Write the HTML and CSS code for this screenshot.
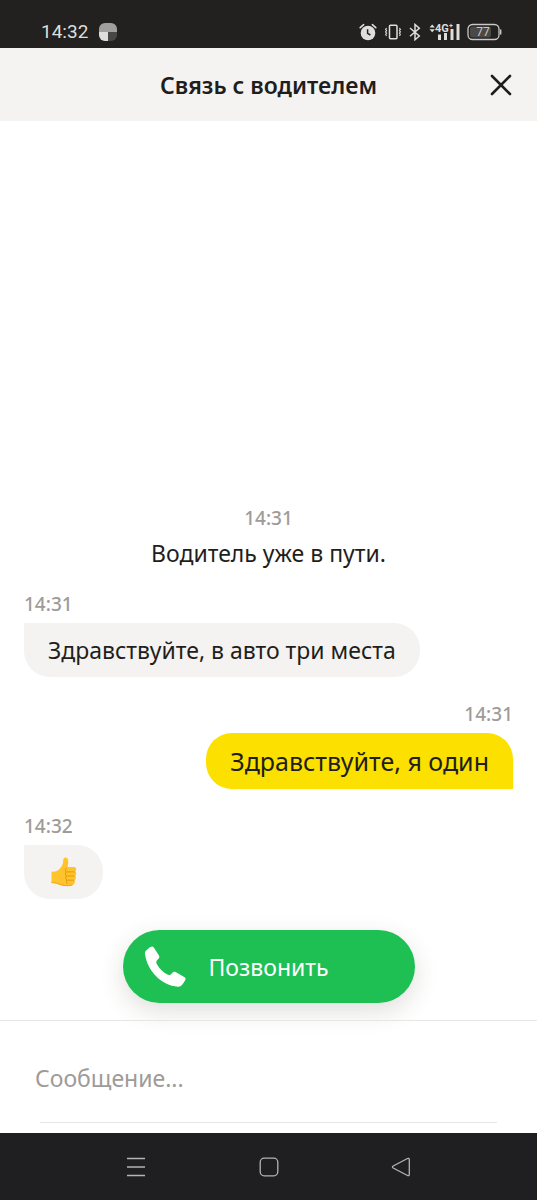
FILE: index.html
```html
<!DOCTYPE html>
<html lang="ru">
<head>
    <meta charset="UTF-8">
    <meta name="viewport" content="width=device-width, initial-scale=1.0">
    <title>Связь с водителем</title>
    <link rel="stylesheet" href="styles.css">
</head>
<body>
    <div class="status-bar">
        <span class="clock">14:32</span>
        <svg class="app-icon" width="18" height="18" viewBox="0 0 18 18">
            <path d="M0 9V6a6 6 0 0 1 6-6h6a6 6 0 0 1 6 6v3z" fill="#a09f9d"/>
            <path d="M0 9h9v9H6a6 6 0 0 1-6-6z" fill="#dededc"/>
            <path d="M9 9h9v3a6 6 0 0 1-6 6H9z" fill="#484745"/>
        </svg>
        <div class="status-icons">
            <svg width="18" height="18" viewBox="0 0 18 18">
                <circle cx="9" cy="10" r="7.3" fill="#dededc"/>
                <path d="M1.2 4.6 4.6 1.6M16.8 4.6l-3.4-3" stroke="#dededc" stroke-width="1.6" stroke-linecap="round"/>
                <path d="M8.6 6.3v4l2.8 1.7" fill="none" stroke="#22211f" stroke-width="1.5"/>
            </svg>
            <svg width="16" height="16" viewBox="0 0 16 16" fill="none" stroke="#dededc">
                <rect x="4.5" y="1.200" width="7.500" height="13.600" rx="1" stroke-width="1.5"/>
                <path d="M1.6 4 .6 5.3l1 1.3-1 1.3 1 1.3-1 1.3 1 1.3M14.4 4l1 1.3-1 1.3 1 1.3-1 1.3 1 1.3-1 1.3" stroke-width="1.1"/>
            </svg>
            <svg width="12" height="18" viewBox="0 0 12 18" fill="none" stroke="#dededc" stroke-width="1.5">
                <path d="m1 5 9.3 8L6 16.7V1.5l4.3 3.7L1 13.2"/>
            </svg>
            <svg width="32" height="18" viewBox="0 0 32 18" fill="#dededc">
                <path d="m.5 4.4 2.7-3 2.7 3zM.5 6.2h5.4l-2.7 3zM9 11.500h3V17h-3zM15 10h3v7h-3zM21.500 6h3v11h-3zM27.500 1h3v16h-3z"/>
                <text class="signal-text" x="6" y="9">4G</text>
                <path d="M22 .8v3.6M20.2 2.6h3.6" stroke="#dededc"/>
            </svg>
            <svg class="battery" width="35" height="18" viewBox="0 0 35 18">
                <rect x="1" y="1.5" width="31" height="15" rx="4.5" fill="none" stroke="#c9c8c6" stroke-width="1.3"/>
                <rect x="3" y="3.5" width="21" height="11" rx="2.5" fill="#4a4947"/>
                <path d="M33.7 6.5v5" stroke="#c9c8c6" stroke-width="1.4"/>
                <text class="battery-text" x="16" y="13" text-anchor="middle">77</text>
            </svg>
        </div>
    </div>

    <header class="header">
        <h1>Связь с водителем</h1>
        <button class="close" type="button" aria-label="Закрыть">
            <svg width="24" height="24" viewBox="0 0 24 24" fill="none" stroke="#1f1e1c" stroke-width="2.6" stroke-linecap="round">
                <path d="m3 3 18 18M21 3 3 21"/>
            </svg>
        </button>
    </header>

    <main class="chat">
        <div class="system">
            <time>14:31</time>
            <p>Водитель уже в пути.</p>
        </div>
        <div class="message">
            <time>14:31</time>
            <p class="bubble">Здравствуйте, в авто три места</p>
        </div>
        <div class="message own">
            <time>14:31</time>
            <p class="bubble">Здравствуйте, я один</p>
        </div>
        <div class="message">
            <time>14:32</time>
            <p class="bubble">
                <svg width="31" height="32" viewBox="0 0 31 32" role="img" aria-label="Палец вверх">
                    <path d="M3.500 15.600c3.500.4 6-.6 8-2.600 2-2.200 3.600-4.600 3.700-8.500 0-4 4-4 4.800-.8.600 2.600.2 5-.4 7.300h6.200c2.600 0 3.200 3.400 1.500 4.500 1.400 1 1.300 3.500-.1 4.400 1.200 1.100 1 3.400-.6 4.200.9 1.600.1 4.300-2.200 5.100-3.700 1.100-7.600 1-11 0-3.300-1-5.400-2.400-9.900-2.300z" fill="#ffc32b"/>
                    <path d="M18.500 12c-1.500.9-1.600 2.900-.2 3.900-1.300 1-1.200 3.200.1 4.100-1.200 1-.9 3 .4 3.900-.8 1.200-.5 3 .7 4M18.500 15.900h8M18.500 20h8M18.800 24.200h7" fill="none" stroke="#e39b14" stroke-width="1" stroke-linecap="round"/>
                    <path d="M3.500 26.600c4.500-.1 6.600 1.300 9.900 2.300 3.400 1 7.300 1.100 11 0" fill="none" stroke="#efa51c" stroke-width="1"/>
                </svg>
            </p>
        </div>
        <button class="call" type="button">
            <svg width="42" height="42" viewBox="0 0 42 42" fill="#fff">
                <path d="M1 8.200C.5 5.800 2 4.300 4.500 2.400 7 .4 8.500-.2 9.800 1.600l5 7.700c1 1.600.6 2.600-.8 4-1.700 1.700-2.200 2.800-1.200 4.700 2.600 4.800 5.800 8 10.600 10.600 1.700.9 2.900.4 4.400-1.200 1.300-1.500 2.300-2.200 3.800-1.300l9 5.200c1.600 1 1 2.200-.5 4.800-1.700 2.900-3.200 4.900-6 4.600C17.300 39.500 3.500 25 1 8.200z"/>
            </svg>
            <span>Позвонить</span>
        </button>
    </main>

    <form class="composer">
        <input type="text" placeholder="Сообщение..." aria-label="Сообщение">
    </form>

    <nav class="nav-bar">
        <button type="button" aria-label="Меню">
            <svg width="20" height="20" viewBox="0 0 20 20" stroke="#b4b4b5" stroke-width="1.4"><path d="M1 1.500h18M1 10h18M1 18.500h18"/></svg>
        </button>
        <button type="button" aria-label="Домой">
            <svg width="20" height="20" viewBox="0 0 20 20" fill="none" stroke="#b4b4b5" stroke-width="1.3"><rect x="1.200" y="1.200" width="17.600" height="17.600" rx="4"/></svg>
        </button>
        <button type="button" aria-label="Назад">
            <svg width="20" height="20" viewBox="0 0 20 20" fill="none" stroke="#b4b4b5" stroke-width="1.3"><path d="M2.200 9 16.500 1.500c1-.5 1.800 0 1.800 1v15c0 1-.8 1.500-1.800 1L2.200 11c-1-.6-1-1.400 0-2z"/></svg>
        </button>
    </nav>
</body>
</html>
```
FILE: styles.css
```css
:root {
    --text: #1f1e1c;
    --muted: #9e9b98;
    --panel: #f4f3f1;
    --line: #e6e6e5;
    --yellow: #fce000;
    --green: #1fc053;
}

* {
    box-sizing: border-box;
}

body {
    margin: 0;
    min-height: 100vh;
    display: flex;
    flex-direction: column;
    background: #fff;
    color: var(--text);
    font-family: "Noto Sans", "Open Sans", sans-serif;
    font-size: 23px;
    line-height: 32px;
}

h1,
p {
    margin: 0;
}

button {
    border: none;
    background: none;
    padding: 0;
    font: inherit;
    color: inherit;
    cursor: pointer;
}

svg {
    display: block;
}

/* Status bar */
.status-bar {
    display: flex;
    align-items: center;
    height: 48px;
    padding: 16px 35px 0 41px;
    background: #22211f;
    color: #dededc;
    font-family: Roboto, sans-serif;
}

.clock {
    font-size: 19px;
}

.app-icon {
    margin-left: 11px;
}

.status-icons {
    display: flex;
    align-items: center;
    gap: 8px;
    margin-left: auto;
}

.signal-text {
    font-size: 11px;
    font-weight: 700;
}

.battery {
    margin-left: -2px;
}

.battery-text {
    fill: #c9c8c6;
    font-size: 12px;
}

/* Header */
.header {
    display: grid;
    grid-template-columns: 1fr auto 1fr;
    align-items: center;
    height: 73px;
    padding: 0 24px;
    background: var(--panel);
}

.header h1 {
    grid-column: 2;
    font-size: 23px;
    font-weight: 600;
}

.close {
    justify-self: end;
}

/* Chat */
.chat {
    flex: 1;
    display: flex;
    flex-direction: column;
    justify-content: flex-end;
    padding: 24px 24px 17px;
}

time {
    color: var(--muted);
    font-size: 19px;
    font-weight: 500;
    line-height: 24px;
}

.system,
.message {
    display: flex;
    flex-direction: column;
    align-items: flex-start;
    gap: 7px;
}

.system {
    align-items: center;
}

.message {
    margin-top: 25px;
}

.system + .message {
    margin-top: 23px;
}

.own {
    align-items: flex-end;
}

.bubble {
    padding: 11px 24px;
    border-radius: 0 26px 26px 26px;
    background: var(--panel);
}

.own .bubble {
    padding: 12px 24px;
    border-radius: 26px 26px 0 26px;
    background: var(--yellow);
    font-size: 25px;
}

.call {
    display: flex;
    align-items: center;
    gap: 23px;
    align-self: center;
    width: 292px;
    height: 73px;
    margin-top: 31px;
    padding: 0 21px;
    border-radius: 37px;
    background: var(--green);
    box-shadow: 0 8px 24px rgba(60, 55, 40, 0.16);
    color: #fff;
}

/* Message input */
.composer {
    padding: 0 40px 10px 35px;
    border-top: 1px solid var(--line);
}

.composer::after {
    content: "";
    display: block;
    height: 1px;
    margin-left: 5px;
    background: var(--line);
}

.composer input {
    display: block;
    width: 100%;
    height: 101px;
    padding: 12px 0 0;
    border: none;
    background: none;
    font: inherit;
    color: inherit;
    outline: none;
}

.composer input::placeholder {
    color: var(--muted);
    opacity: 1;
}

/* Navigation */
.nav-bar {
    display: grid;
    grid-template-columns: repeat(3, 1fr);
    justify-items: center;
    align-items: center;
    height: 67px;
    padding: 0 13%;
    background: #1f1f21;
}

.nav-bar button {
    padding: 12px;
}
```
